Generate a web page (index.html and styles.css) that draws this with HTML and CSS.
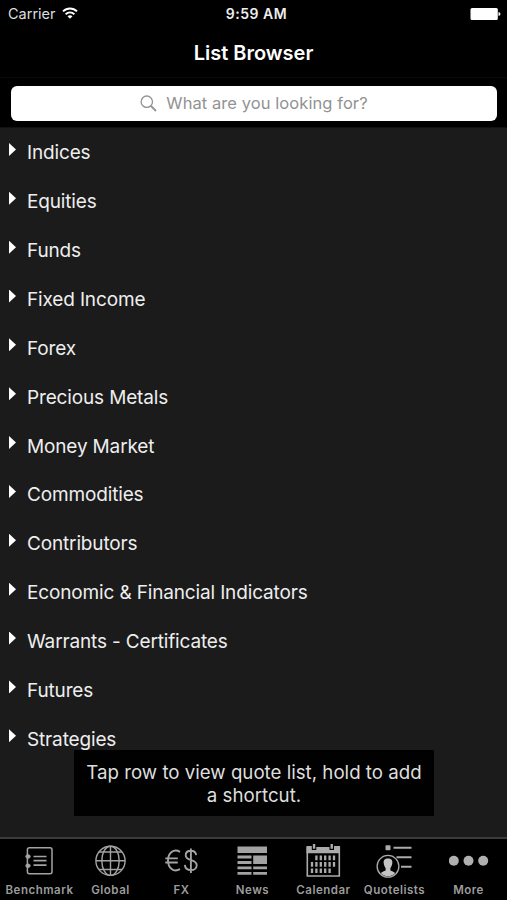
FILE: index.html
```html
<!DOCTYPE html>
<html lang="en">
<head>
<meta charset="utf-8">
<title>List Browser</title>
<link rel="stylesheet" href="styles.css">
</head>
<body>
<div class="app">
  <header class="status">
    <div class="carrier"><span>Carrier</span>
      <svg class="wifi" width="16" height="13" viewBox="0 0 16 13" fill="none" stroke="#fff" stroke-width="1.9"><path d="M1 4.4C5 .5 11 .5 15 4.4M3.6 7.2c2.6-2.4 6.2-2.4 8.8 0"/><path d="M5.5 9.2c1.6-1.3 3.4-1.3 5 0L8 11.8z" fill="#fff" stroke="none"/></svg>
    </div>
    <span class="time">9:59 AM</span>
    <svg class="battery" width="31" height="12" viewBox="0 0 31 12" fill="#fff"><rect x=".5" width="27.3" height="12" rx="1.5"/><path d="M28.5 4v4q2-.5 2-2t-2-2"/></svg>
  </header>
  <h1 class="title"><span>List Browser</span></h1>
  <div class="search">
    <div class="field">
      <svg width="17" height="17" viewBox="0 0 17 17" fill="none" stroke="#929292" stroke-width="1.3"><circle cx="6.8" cy="6.7" r="5.7"/><path d="M11 11l5 5" stroke-width="1.8"/></svg>
      <span>What are you looking for?</span>
    </div>
  </div>
  <main class="content">
    <ul class="list">
      <li><i></i><span>Indices</span></li>
      <li><i></i><span>Equities</span></li>
      <li><i></i><span>Funds</span></li>
      <li><i></i><span>Fixed Income</span></li>
      <li><i></i><span>Forex</span></li>
      <li><i></i><span>Precious Metals</span></li>
      <li><i></i><span>Money Market</span></li>
      <li><i></i><span>Commodities</span></li>
      <li><i></i><span>Contributors</span></li>
      <li><i></i><span>Economic &amp; Financial Indicators</span></li>
      <li><i></i><span>Warrants - Certificates</span></li>
      <li><i></i><span>Futures</span></li>
      <li><i></i><span>Strategies</span></li>
    </ul>
    <div class="toast">Tap row to view quote list, hold to add<br>a shortcut.</div>
  </main>
  <nav class="tabs">
    <div class="tab">
      <svg width="40" height="36" viewBox="0 0 40 36" fill="none" stroke="#a3a3a3" stroke-width="1.5"><rect x="7.4" y="4.8" width="24.6" height="26" rx="2"/><path d="M13.5 13.5h13M13.5 17.7h13M13.5 22.1h13" stroke-width="1.7"/><path d="M5.5 13.5h5M5.5 22.8h5" stroke-width="2"/><g fill="#a3a3a3" stroke="none"><circle cx="8" cy="13.5" r="2.2"/><circle cx="8" cy="22.8" r="2.2"/></g></svg>
      <span>Benchmark</span>
    </div>
    <div class="tab">
      <svg width="40" height="36" viewBox="0 0 40 36" fill="none" stroke="#a3a3a3" stroke-width="1.4"><circle cx="19.5" cy="17.8" r="14.6"/><ellipse cx="19.5" cy="17.8" rx="8.7" ry="14.6"/><path d="M19.5 3.2v29.2M4.9 17.8h29.2M8 9h23M8 26.5h23"/></svg>
      <span>Global</span>
    </div>
    <div class="tab">
      <svg width="40" height="36" viewBox="0 0 40 36" fill="none" stroke="#a3a3a3" stroke-width="1.9"><path d="M18.5 8.8C12 5.3 6.5 10 6.5 17.5s5.5 12.2 12 8.7M3.8 15.4h12.5M3.8 19.5h12.5M34.7 12.1c-.4-3-2.5-4.4-5.2-4.4-3.1 0-5.3 1.7-5.3 4.5 0 6.5 11 3.2 11 10 0 3-2.5 4.9-5.6 4.9-3.4 0-6-1.8-6.2-5.2M29.4 5.5v24.5" transform="translate(-.5)"/></svg>
      <span>FX</span>
    </div>
    <div class="tab">
      <svg width="40" height="36" viewBox="0 0 40 36" fill="#a3a3a3"><path d="M4.5 3.5h29.5v6.5h-29.5zM4.5 12.5H18.5v3H4.5zM4.5 18H18.5v3H4.5zM20.2 12.5H34v8.5H20.2zM4.5 23.5H18.5v2.8H4.5zM20.2 23.5H34v2.8H20.2zM4.5 29H18.5v2.7H4.5zM20.2 29H34v2.7H20.2z"/></svg>
      <span>News</span>
    </div>
    <div class="tab">
      <svg width="40" height="36" viewBox="0 0 40 36" fill="none" stroke="#ababab"><path d="M2.5 3H7.800v4h4.500V4H25.500v3h4.500V3h6v7.300H2.500z" fill="#ababab" stroke="none"/><path d="M10.050 1v4.800M27.750 1v4.800" stroke-width="2.400"/><path d="M3.300 4v29h32V4" stroke-width="1.600"/><path d="M12.400 12.500v4.700M16.800 12.500v4.700M21.200 12.500v4.700M25.600 12.500v4.700M30 12.500v4.700M8 19v4.700M12.400 19v4.700M16.800 19v4.700M21.200 19v4.700M25.600 19v4.700M30 19v4.700M8 25.500v4.500M12.400 25.500v4.500M16.800 25.500v4.500M21.200 25.500v4.500M25.600 25.500v4.500" stroke-width="2.300"/></svg>
      <span>Calendar</span>
    </div>
    <div class="tab">
      <svg width="40" height="36" viewBox="0 0 40 36" fill="none" stroke="#ababab"><rect x="10.5" y="2.2" width="5" height="5" rx=".7" fill="#ababab" stroke="none"/><path d="M18.5 4.7h18M21.5 14.2h15M26 23.7h10.5" stroke-width="2.1"/><circle cx="13" cy="23.3" r="10.9" stroke-width="1.3"/><path d="M13 15.500c-3.400 0-4.700 2-4.300 4.600.2 2.300.9 3.700 1.900 4.800v2.500c-1.400.9-3.600 1-4.700 2.600 2 2.300 4.300 3.300 7.100 3.300s5.100-1 7.100-3.300c-1.100-1.600-3.300-1.700-4.700-2.600v-2.500c1-1.100 1.700-2.500 1.900-4.800.4-2.600-.9-4.600-4.300-4.600z" fill="#c4c4c4" stroke="none"/></svg>
      <span>Quotelists</span>
    </div>
    <div class="tab">
      <svg width="40" height="36" viewBox="0 0 40 36" fill="#b0b0b0"><circle cx="4.8" cy="17.8" r="5"/><circle cx="19.5" cy="17.8" r="5"/><circle cx="34.2" cy="17.8" r="5"/></svg>
      <span>More</span>
    </div>
  </nav>
</div>
</body>
</html>
```
FILE: styles.css
```css
* { box-sizing: border-box; }
body { margin: 0; background: #000; font-family: Inter, "Liberation Sans", sans-serif; color: #fff; }
.app { width: 507px; height: 900px; display: flex; flex-direction: column; overflow: hidden; background: #000; }
.status { height: 27px; display: grid; grid-template-columns: 1fr auto 1fr; align-items: center; padding: 0 6px 0 8px; font-size: 14.5px; }
.carrier { display: flex; align-items: center; gap: 6px; color: #ddd; }
.time { font-weight: 600; font-size: 14px; letter-spacing: .5px; padding-left: 4px; color: #eee; }
.battery { justify-self: end; }
.title { height: 51px; margin: 0; padding-top: 2px; display: flex; align-items: center; justify-content: center; font-size: 20px; line-height: 24px; font-weight: 600; border-bottom: 1px solid #090909; }
.search { height: 50px; padding: 8px 10px 7px 11px; border-bottom: 1px solid #101010; }
.field { height: 35px; border-radius: 6px; background: #fff; display: flex; align-items: center; justify-content: center; gap: 9px; color: #929292; font-size: 16.5px; letter-spacing: .07px; }
.field span { margin-top: -2px; }
.content { height: 709px; background: #1b1b1b; position: relative; }
.list { list-style: none; margin: 0; padding: 0; }
.list li { height: 48.87px; display: flex; align-items: center; padding-left: 9px; font-size: 19px; letter-spacing: -.15px; color: #eee; }
.list span { padding-top: 1px; }
.list i { width: 7px; height: 13px; margin: -6px 11px 0 0; background: #fff; clip-path: polygon(0 0, 100% 50%, 0 100%); }
.toast { position: absolute; left: 74px; top: 622px; width: 360px; height: 66px; padding-top: 11px; background: #010101; color: #dedede; font-size: 18.7px; line-height: 23px; text-align: center; white-space: nowrap; }
.tabs { height: 63px; border-top: 2px solid #3b3b3b; display: grid; grid-template-columns: repeat(6, 71px) 77px; padding-left: 4px; }
.tab { display: flex; flex-direction: column; align-items: center; padding-top: 4px; color: #9c9c9c; font-size: 11.5px; font-weight: 600; line-height: 14px; letter-spacing: .5px; }
.tab span { margin-top: 4px; }
```
